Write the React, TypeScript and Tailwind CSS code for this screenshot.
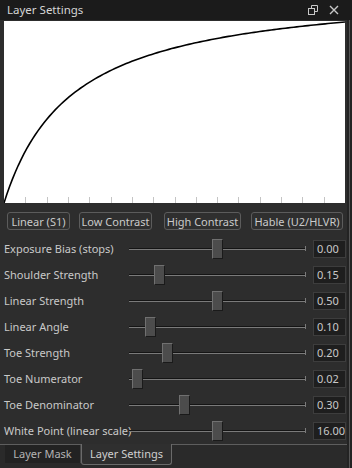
import React from "react";

const rows = [
  { label: "Exposure Bias (stops)", value: "0.00", pos: 88 },
  { label: "Shoulder Strength", value: "0.15", pos: 30 },
  { label: "Linear Strength", value: "0.50", pos: 88 },
  { label: "Linear Angle", value: "0.10", pos: 21 },
  { label: "Toe Strength", value: "0.20", pos: 38 },
  { label: "Toe Numerator", value: "0.02", pos: 8 },
  { label: "Toe Denominator", value: "0.30", pos: 55 },
  { label: "White Point (linear scale)", value: "16.00", pos: 88 },
];

const presets = [
  { label: "Linear (S1)", w: "w-[63px]", ml: "ml-[3px]" },
  { label: "Low Contrast", w: "w-[73px]", ml: "ml-[9px]" },
  { label: "High Contrast", w: "w-[77px]", ml: "ml-[12px]" },
  { label: "Hable (U2/HLVR)", w: "w-[92px]", ml: "ml-[10px]" },
];

const PLOT_W = 341;
const PLOT_H = 182;

// reinhard-ish curve, close enough to the filmic one
const curvePath = () => {
  const pts: string[] = [];
  for (let i = 0; i <= 120; i++) {
    const t = i / 120;
    const v = (t * 1.2) / (t + 0.2);
    pts.push(`${(t * PLOT_W).toFixed(2)},${(PLOT_H - v * (PLOT_H - 1)).toFixed(2)}`);
  }
  return "M" + pts.join(" L");
};

const CurvePlot = () => {
  const ticks = Array.from({ length: 15 }, (_, i) => ((i + 1) * PLOT_W) / 16);
  return (
    <svg width={PLOT_W} height={PLOT_H} className="block">
      <rect width={PLOT_W} height={PLOT_H} fill="#ffffff" />
      {ticks.map((x) => (
        <line
          key={x}
          x1={Math.round(x) + 0.5}
          x2={Math.round(x) + 0.5}
          y1={PLOT_H - 6}
          y2={PLOT_H}
          stroke="#c4c4c4"
          strokeWidth={1}
        />
      ))}
      <path d={curvePath()} fill="none" stroke="#000" strokeWidth={1.6} />
    </svg>
  );
};

const Slider = ({ pos }: { pos: number }) => (
  <div className="relative w-[177px] h-[20px] flex items-center">
    <div className="w-full flex flex-col">
      <div className="h-px bg-[#141414]" />
      <div className="h-px bg-[#7a7a7a]" />
    </div>
    <div className="absolute right-0 top-[7px] w-px h-[5px] bg-[#7a7a7a]" />
    <div
      className="absolute top-0 w-[11px] h-[20px] bg-[#4c4c4c] border border-t-[#707070] border-l-[#707070] border-r-[#1a1a1a] border-b-[#1a1a1a]"
      style={{ left: pos - 5 }}
    />
  </div>
);

export default function App() {
  return (
    <div
      className="w-[352px] h-[468px] bg-[#2d2d2d] flex overflow-hidden text-[#c9c9c9]"
      style={{ fontFamily: '"Noto Sans", "Open Sans", sans-serif' }}
    >
      <div className="w-[347px] flex flex-col">
        <div className="h-[20px] bg-[#1b1b1b] flex items-center pl-[7px] pr-[8px]">
          <span className="text-[11.5px] leading-none text-[#d6d6d6]">Layer Settings</span>
          <div className="ml-auto flex items-center gap-[11px] text-[#c8c8c8]">
            <svg width="10" height="10" viewBox="0 0 10 10">
              <rect x="0.5" y="3.5" width="6" height="6" fill="none" stroke="currentColor" />
              <path d="M3.5 3.5V0.5H9.5V6.5H6.5" fill="none" stroke="currentColor" />
            </svg>
            <svg width="10" height="10" viewBox="0 0 10 10">
              <path d="M1 1L9 9M9 1L1 9" stroke="currentColor" strokeWidth="1.4" />
            </svg>
          </div>
        </div>

        <div className="pl-[4px] pt-[1px]">
          <CurvePlot />
        </div>

        <div className="flex mt-[9px] pl-[4px]">
          {presets.map((p) => (
            <button
              key={p.label}
              className={`${p.w} ${p.ml} h-[18px] rounded-[3px] border border-[#5c5c5c] bg-[#2f2f2f] text-[11px] leading-none text-[#cacaca] flex items-center justify-center whitespace-nowrap`}
            >
              {p.label}
            </button>
          ))}
        </div>

        <div className="flex flex-col mt-[6px]">
          {rows.map((r) => (
            <div key={r.label} className="h-[26px] flex items-center">
              <span className="w-[129px] pl-[4px] text-[11px] whitespace-nowrap">{r.label}</span>
              <Slider pos={r.pos} />
              <div className="ml-[7px] w-[33px] h-[18px] bg-[#1e1e1e] border border-[#3d3d3d] flex items-center pl-[3px] text-[11px]">
                {r.value}
              </div>
            </div>
          ))}
        </div>

        <div className="flex-1 border-t border-[#5e5e5e] bg-[#2a2a2a] flex items-start pl-[5px]">
          <div className="w-[76px] h-[18px] bg-[#222222] border-r border-[#444] flex items-center justify-center text-[11px] text-[#b4b4b4]">
            Layer Mask
          </div>
          <div className="w-[91px] h-[21px] -mt-px bg-[#2f2f2f] border border-t-0 border-[#6a6a6a] rounded-b-[3px] flex items-center justify-center text-[11px] text-[#d0d0d0]">
            Layer Settings
          </div>
        </div>
      </div>
      <div className="w-[5px] flex flex-col">
        <div className="h-[20px] bg-[#1b1b1b]" />
        <div className="flex-1 bg-[#232323] flex">
          <div className="w-[2px]" />
          <div className="w-px bg-[#555]" />
        </div>
      </div>
    </div>
  );
}
